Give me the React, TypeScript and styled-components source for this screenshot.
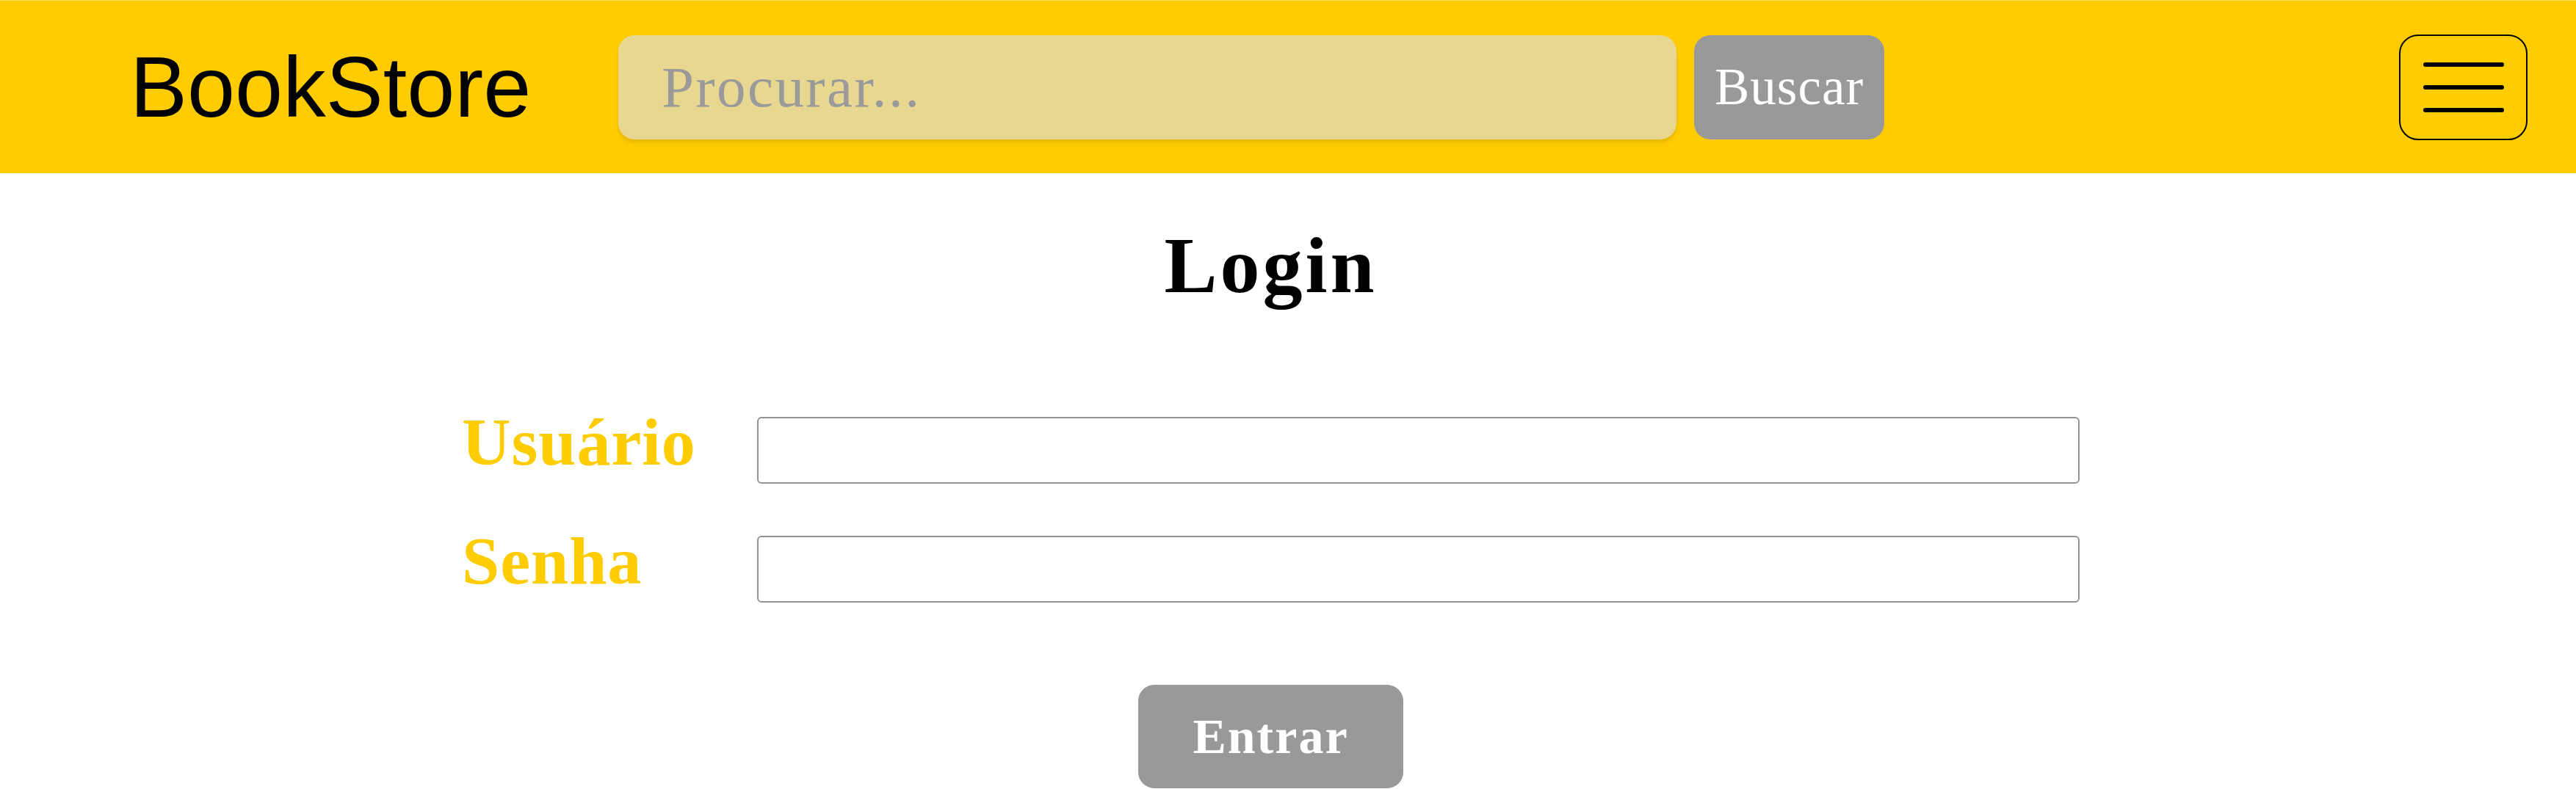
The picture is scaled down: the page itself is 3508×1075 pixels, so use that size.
import React from "react";
import styled, { createGlobalStyle } from "styled-components";

const GlobalStyle = createGlobalStyle`
  html, body {
    margin: 0;
    padding: 0;
    background: #ffffff;
    font-family: "Liberation Serif", "Times New Roman", serif;
  }
  * { box-sizing: border-box; }
`;

const Page = styled.div`
  width: 3508px;
  min-height: 1075px;
  display: flex;
  flex-direction: column;
  overflow: hidden;
`;

const Header = styled.header`
  height: 236px;
  background: #ffcc00;
  border-top: 1px solid #ffe066;
  display: flex;
  align-items: center;
  padding: 0 66px 0 177px;
`;

const Brand = styled.a`
  width: 665px;
  flex-shrink: 0;
  font-family: "Liberation Sans", Arial, sans-serif;
  font-size: 117px;
  line-height: 1;
  color: #000;
  text-decoration: none;
`;

const SearchForm = styled.form`
  display: flex;
  align-items: center;
  gap: 24px;
`;

const SearchInput = styled.input`
  width: 1441px;
  height: 142px;
  border: none;
  border-radius: 22px;
  background: #e8d791;
  box-shadow: 0 4px 5px rgba(180, 140, 0, 0.35);
  padding: 0 0 0 59px;
  font-family: "Liberation Serif", "Times New Roman", serif;
  font-size: 79px;
  letter-spacing: 2.4px;
  color: #333;
  outline: none;
  &::placeholder {
    color: #9a9a9a;
  }
`;

const GrayButton = styled.button<{ $w: number; $h: number; $size: number; $bold?: boolean; $ls: number }>`
  width: ${(p) => p.$w}px;
  height: ${(p) => p.$h}px;
  border: none;
  border-radius: 22px;
  background: #999999;
  color: #ffffff;
  font-family: "Liberation Serif", "Times New Roman", serif;
  font-size: ${(p) => p.$size}px;
  font-weight: ${(p) => (p.$bold ? 700 : 400)};
  letter-spacing: ${(p) => p.$ls}px;
  display: flex;
  align-items: center;
  justify-content: center;
  padding: 0;
  cursor: pointer;
`;

const Toggler = styled.button`
  margin-left: auto;
  width: 175px;
  height: 144px;
  border: 2px solid #000;
  border-radius: 26px;
  background: transparent;
  display: flex;
  align-items: center;
  justify-content: center;
  padding: 0;
`;

const Main = styled.main`
  display: flex;
  flex-direction: column;
  width: 2203px;
  margin-left: 629px;
  padding-top: 72px;
`;

const Title = styled.h1`
  margin: 0;
  text-align: center;
  font-family: "Liberation Serif", "Times New Roman", serif;
  font-weight: 700;
  font-size: 108px;
  line-height: 108px;
  letter-spacing: 4px;
  color: #000;
`;

const Fields = styled.div`
  margin-top: 152px;
  display: grid;
  grid-template-columns: 402px 1801px;
  row-gap: 71px;
  align-items: start;
`;

const Label = styled.label`
  font-family: "Liberation Serif", "Times New Roman", serif;
  font-weight: 700;
  font-size: 92px;
  line-height: 69px;
  letter-spacing: 1px;
  color: #ffcc00;
`;

const TextField = styled.input`
  width: 1801px;
  height: 91px;
  border: 2px solid #939393;
  border-radius: 6px;
  background: #fff;
  font-family: "Liberation Serif", serif;
  font-size: 60px;
  padding: 0 20px;
  outline: none;
`;

const Actions = styled.div`
  margin-top: 112px;
  display: flex;
  justify-content: center;
`;

const MenuIcon = () => (
  <svg width="110" height="68" viewBox="0 0 110 68" fill="none">
    <path
      d="M3 3H107M3 34H107M3 65H107"
      stroke="#000"
      strokeWidth="6"
      strokeLinecap="round"
    />
  </svg>
);

export default function App() {
  return (
    <>
      <GlobalStyle />
      <Page>
        <Header>
          <Brand href="#">BookStore</Brand>
          <SearchForm onSubmit={(e) => e.preventDefault()}>
            <SearchInput type="search" placeholder="Procurar..." />
            <GrayButton type="submit" $w={259} $h={142} $size={71} $ls={1}>
              Buscar
            </GrayButton>
          </SearchForm>
          <Toggler type="button" aria-label="Menu">
            <MenuIcon />
          </Toggler>
        </Header>
        <Main>
          <Title>Login</Title>
          <Fields>
            <Label htmlFor="usuario">Usuário</Label>
            <TextField id="usuario" type="text" />
            <Label htmlFor="senha">Senha</Label>
            <TextField id="senha" type="password" />
          </Fields>
          <Actions>
            <GrayButton type="button" $w={361} $h={141} $size={68} $bold $ls={2}>
              Entrar
            </GrayButton>
          </Actions>
        </Main>
      </Page>
    </>
  );
}
